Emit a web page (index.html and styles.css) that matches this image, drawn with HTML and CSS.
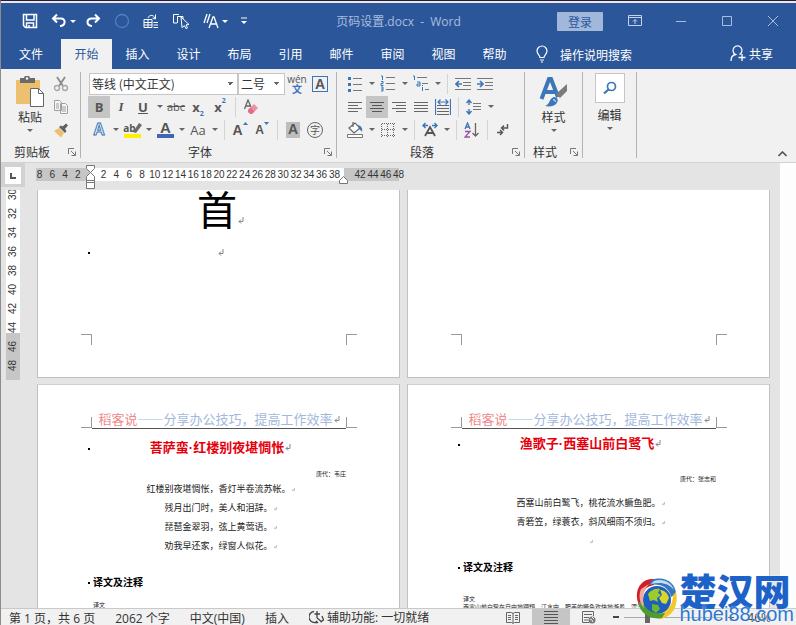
FILE: index.html
```html
<!DOCTYPE html>
<html lang="zh-CN">
<head>
  <meta charset="UTF-8">
  <meta name="viewport" content="width=device-width, initial-scale=1.0">
  <title>页码设置.docx - Word</title>
  <link rel="stylesheet" href="styles.css">
</head>
<body>

<svg class="defs" aria-hidden="true">
  <symbol id="mark" viewBox="0 0 6 8">
    <path d="M5 0v4.500H1M3 2.500l-2 2 2 2" fill="none" stroke="currentColor" stroke-width="1"/>
  </symbol>
  <symbol id="launcher" viewBox="0 0 8 8">
    <path d="M.5 6V.5H6M3 3l4 4M7.500 3.500v4h-4" fill="none" stroke="#777"/>
  </symbol>
</svg>

<div class="window">
  <header class="titlebar">
    <div class="quick">
      <button class="qbtn" aria-label="保存"><svg width="16" height="16" viewBox="0 0 16 16"><path d="M1.500 1.500h13v13h-11l-2-2zM4.500 1.500v5.500h7.500V1.500M4.500 14v-4h7v4M7 12v2" fill="none" stroke="#fff" stroke-width="1.500"/></svg></button>
      <button class="qbtn" aria-label="撤消"><svg width="16" height="16" viewBox="0 0 16 16"><path d="M2 5.500h8c5 0 5 7-1 7.500M6 1.500l-4 4 4 4" fill="none" stroke="#fff" stroke-width="2"/></svg><i class="caret"></i></button>
      <button class="qbtn" aria-label="恢复"><svg width="16" height="16" viewBox="0 0 16 16"><path d="M14 5.500H7c-6 0-6 7 0 7.500M10 1.500l4 4-4 4" fill="none" stroke="#fff" stroke-width="2"/></svg></button>
      <button class="qbtn" aria-label="状态"><svg width="16" height="16" viewBox="0 0 16 16"><circle cx="8" cy="8" r="6.500" fill="none" stroke="#4f7fc4" stroke-width="1.300"/></svg></button>
      <button class="qbtn" aria-label="表格"><svg width="16" height="16" viewBox="0 0 16 16"><path d="M1 6.500h8v8H1zM1 9.500h8M1 12h8M5 7v8M10.500 9.500H15M10.500 12H15M10.500 14.500H15M5 5c1-3 5-4 7 0M12.500 1.500V6l-3-1" fill="none" stroke="#fff"/></svg></button>
      <button class="qbtn" aria-label="选择"><svg width="18" height="16" viewBox="0 0 18 16"><path d="M7 1.500H1.500V10H5M5.500 10V3.500h5.500V6" fill="none" stroke="#fff"/><path d="M9 4l8 7.500-3 .4 1.500 3-1.500.8-1.500-3-2.500 1.800z" fill="#2b579a" stroke="#fff"/></svg></button>
      <button class="qbtn" aria-label="样式"><svg width="16" height="16" viewBox="0 0 16 16"><path d="M1 10L4 1M4 10L7 1M6 15l4-11h1l4 11M8 11h6" fill="none" stroke="#fff" stroke-width="1.300"/></svg><i class="caret"></i></button>
      <button class="qbtn last" aria-label="自定义快速访问工具栏"><svg width="8" height="8" viewBox="0 0 8 8"><path d="M1 1h6" stroke="#fff"/><path d="M1 4h6L4 7z" fill="#fff"/></svg></button>
    </div>
    <h1 class="doc-name">页码设置.docx&nbsp; -&nbsp; Word</h1>
    <div class="controls">
      <button class="signin">登录</button>
      <button class="ctl" aria-label="功能区显示选项"><svg width="14" height="12" viewBox="0 0 14 12"><path d="M.5.500h13v10H.5zM.5 2.500h13M7 9V4.500M5 6.500l2-2 2 2" fill="none" stroke="#c5d3ea"/></svg></button>
      <button class="ctl" aria-label="最小化"><svg width="12" height="12" viewBox="0 0 12 12"><path d="M1 6.500h10" stroke="#a9bddd"/></svg></button>
      <button class="ctl" aria-label="最大化"><svg width="12" height="12" viewBox="0 0 12 12"><path d="M1.500 1.500h9v9h-9z" fill="none" stroke="#a9bddd"/></svg></button>
      <button class="ctl" aria-label="关闭"><svg width="12" height="12" viewBox="0 0 12 12"><path d="M1 1l10 10M11 1L1 11" stroke="#a9bddd"/></svg></button>
    </div>
  </header>

  <nav class="tabs">
    <button class="tab file">文件</button>
    <button class="tab active">开始</button>
    <button class="tab">插入</button>
    <button class="tab">设计</button>
    <button class="tab">布局</button>
    <button class="tab">引用</button>
    <button class="tab">邮件</button>
    <button class="tab">审阅</button>
    <button class="tab">视图</button>
    <button class="tab">帮助</button>
    <button class="tell"><svg width="12" height="18" viewBox="0 0 12 18"><path d="M4 12.500c0-2-3-3.500-3-6.500a5 5 0 0 1 10 0c0 3-3 4.500-3 6.500zM4 15h4M5 17h2" fill="none" stroke="#fff" stroke-width="1.200"/></svg>操作说明搜索</button>
    <button class="share"><svg width="16" height="18" viewBox="0 0 16 18"><path d="M1 17c0-4 2-6 4.500-6.500a4.500 4.500 0 1 1 4 0M12 10v7M8.500 13.500h7" fill="none" stroke="#fff" stroke-width="1.300"/></svg>共享</button>
  </nav>

  <section class="ribbon">
    <div class="group clipboard">
      <div class="group-body">
        <button class="big">
          <svg width="30" height="32" viewBox="0 0 30 32"><path d="M1 4h24v24H1z" fill="#edc06f"/><path d="M5 2h4c0-3 6-3 6 0h5v5H5z" fill="#6a6a6a"/><circle cx="12" cy="2.500" r="1.200" fill="#fff"/><path d="M15.500 12.500h8l5 5v13h-13z" fill="#fff" stroke="#666"/><path d="M23.500 12.500v5h5" fill="none" stroke="#666"/></svg>
          <span>粘贴</span><i class="caret"></i>
        </button>
        <div class="stack">
          <button class="btn" aria-label="剪切"><svg width="16" height="16" viewBox="0 0 16 16"><path d="M4 1l6 9M12 1L6 10" stroke="#8a8a8a" stroke-width="1.800"/><circle cx="4" cy="12" r="2.500" fill="none" stroke="#a9a9a9" stroke-width="1.400"/><circle cx="12" cy="12" r="2.500" fill="none" stroke="#a9a9a9" stroke-width="1.400"/></svg></button>
          <button class="btn" aria-label="复制"><svg width="16" height="16" viewBox="0 0 16 16"><path d="M1.500 1.500h5l2 2v8h-7zM7.500 4.500h5l2 2v8h-7z" fill="#f6f6f6" stroke="#a0a0a0"/><path d="M3 5h3M3 7h3M3 9h3M9 8h4M9 10h4M9 12h4" stroke="#a0a0a0"/></svg></button>
          <button class="btn" aria-label="格式刷"><svg width="16" height="16" viewBox="0 0 16 16"><path d="M1 9l5-3 5 5-3 4.500z" fill="#edc06f"/><path d="M6 5l6 6 1.500-2-1.500-2 3-3.500L13 1.500 9.500 4.500 8 3.500z" fill="#606060"/></svg></button>
        </div>
      </div>
      <div class="group-name"><span>剪贴板</span><button class="launch" aria-label="剪贴板选项"><svg width="8" height="8"><use href="#launcher"/></svg></button></div>
    </div>

    <div class="group font">
      <div class="group-body rows">
        <div class="row">
          <select class="combo face" aria-label="字体"><option>等线 (中文正文)</option></select>
          <select class="combo size" aria-label="字号"><option>二号</option></select>
          <button class="btn wen" aria-label="拼音指南"><span>wén</span><b>文</b></button>
          <button class="btn" aria-label="字符边框"><span class="boxed">A</span></button>
        </div>
        <div class="row">
          <button class="btn on bold">B</button>
          <button class="btn italic">I</button>
          <button class="btn under">U</button><i class="caret"></i>
          <button class="btn strike">abc</button>
          <button class="btn script">x<sub>2</sub></button>
          <button class="btn script">x<sup>2</sup></button>
          <i class="sep"></i>
          <button class="btn" aria-label="清除格式"><svg width="16" height="16" viewBox="0 0 16 16"><path d="M1.500 10L5 1l3 7M3 7h4" fill="none" stroke="#666" stroke-width="1.300"/><path d="M5 11l6-6 4 4-6 6H7.500L5 13z" fill="#ee8fa2"/><path d="M5 11l2.500-2.500 4 4L9 15H7.500L5 13z" fill="#e26f86"/></svg></button>
        </div>
        <div class="row">
          <button class="btn effect">A</button><i class="caret"></i>
          <button class="btn hilite" aria-label="突出显示">ab<svg width="9" height="10" viewBox="0 0 9 10"><path d="M0 9l6-9 3 2-6 8z" fill="#6a6a6a"/></svg></button><i class="caret"></i>
          <button class="btn color">A</button><i class="caret"></i>
          <button class="btn case">Aa</button><i class="caret"></i>
          <i class="sep"></i>
          <button class="btn grow" aria-label="增大字号">A<svg width="5" height="3" viewBox="0 0 5 3"><path d="M0 3h5L2.500 0z" fill="#3b76b8"/></svg></button>
          <button class="btn shrink" aria-label="减小字号">A<svg width="5" height="3" viewBox="0 0 5 3"><path d="M0 0h5L2.500 3z" fill="#3b76b8"/></svg></button>
          <i class="sep"></i>
          <button class="btn" aria-label="字符底纹"><span class="shaded">A</span></button>
          <button class="btn" aria-label="带圈字符"><span class="ring">字</span></button>
        </div>
      </div>
      <div class="group-name"><span>字体</span><button class="launch" aria-label="字体选项"><svg width="8" height="8"><use href="#launcher"/></svg></button></div>
    </div>

    <div class="group para">
      <div class="group-body rows">
        <div class="row">
          <button class="btn" aria-label="项目符号"><svg width="16" height="16" viewBox="0 0 16 16"><path d="M1 1h3v3H1zM1 7h3v3H1zM1 13h3v3H1z" fill="#3b76b8"/><path d="M6 2.500h9M6 8.500h9M6 14.500h9" stroke="#777"/></svg></button><i class="caret"></i>
          <button class="btn" aria-label="编号"><svg width="16" height="17" viewBox="0 0 16 17"><path d="M1 1h1.500v4M1 6.500h2v2H1v2h2.500M1 12h2v4H1M1 14h2" fill="none" stroke="#3b76b8"/><path d="M6 2.500h9M6 8.500h9M6 14.500h9" stroke="#777"/></svg></button><i class="caret"></i>
          <button class="btn" aria-label="多级列表"><svg width="18" height="17" viewBox="0 0 18 17"><path d="M1 1h1.500v4M5 7h3v4H5V9h3M10.500 12v4M10.500 10v1" fill="none" stroke="#3b76b8"/><path d="M5 2.500h10M10 8.500h6M13 14.500h4" stroke="#777"/></svg></button><i class="caret"></i>
          <i class="sep"></i>
          <button class="btn" aria-label="减少缩进"><svg width="16" height="14" viewBox="0 0 16 14"><path d="M0 1.500h16M8 5.500h8M8 8.500h8M0 12.500h16" stroke="#777"/><path d="M1 7h6M4 4L1 7l3 3" fill="none" stroke="#3b76b8" stroke-width="1.700"/></svg></button>
          <button class="btn" aria-label="增加缩进"><svg width="16" height="14" viewBox="0 0 16 14"><path d="M0 1.500h16M8 5.500h8M8 8.500h8M0 12.500h16" stroke="#777"/><path d="M0 7h6M3 4l3 3-3 3" fill="none" stroke="#3b76b8" stroke-width="1.700"/></svg></button>
        </div>
        <div class="row">
          <button class="btn" aria-label="左对齐"><svg width="14" height="12" viewBox="0 0 14 12"><path d="M0 1.500h14M0 4.500h10M0 7.500h14M0 10.500h10" stroke="#666"/></svg></button>
          <button class="btn on" aria-label="居中"><svg width="14" height="12" viewBox="0 0 14 12"><path d="M0 1.500h14M2 4.500h10M0 7.500h14M2 10.500h10" stroke="#555"/></svg></button>
          <button class="btn" aria-label="右对齐"><svg width="14" height="12" viewBox="0 0 14 12"><path d="M0 1.500h14M4 4.500h10M0 7.500h14M4 10.500h10" stroke="#666"/></svg></button>
          <button class="btn" aria-label="两端对齐"><svg width="14" height="12" viewBox="0 0 14 12"><path d="M0 1.500h14M0 4.500h14M0 7.500h14M0 10.500h14" stroke="#666"/></svg></button>
          <button class="btn" aria-label="分散对齐"><svg width="16" height="16" viewBox="0 0 16 16"><path d="M2 6.500h12M2 9.500h12M2 12.500h12M2 15.500h12" stroke="#666"/><path d="M.5 0v16M15.500 0v16M3 3h10M5.500.5L3 3l2.500 2.500M10.500.5L13 3l-2.500 2.500" fill="none" stroke="#3b76b8" stroke-width="1.200"/></svg></button>
          <i class="sep"></i>
          <button class="btn" aria-label="行距"><svg width="16" height="16" viewBox="0 0 16 16"><path d="M7 4.500h8M7 7.500h8M7 10.500h8" stroke="#777"/><path d="M3 1v5M3 10v5M.5 4L3 1l2.500 3M.5 12L3 15l2.500-3" fill="none" stroke="#3b76b8" stroke-width="1.400"/></svg></button><i class="caret"></i>
        </div>
        <div class="row">
          <button class="btn" aria-label="底纹"><svg width="18" height="17" viewBox="0 0 18 17"><path d="M1.500 13.500h15v3h-15z" fill="#fff" stroke="#777"/><path d="M3 7l6-5 5 5-6 5zM7 1v5" fill="#fff" stroke="#666" stroke-width="1.200"/><path d="M12 4c3 1 5 3 4 7-1-2-2-2-3-3z" fill="#3b76b8"/></svg></button><i class="caret"></i>
          <button class="btn" aria-label="边框"><svg width="14" height="14" viewBox="0 0 14 14"><path d="M1 .5h13M1 6.500h13M.5 1v13M6.500 1v13M12.500 1v13M1 12.500h13" stroke="#666" stroke-dasharray="1 1"/></svg></button><i class="caret"></i>
          <i class="sep"></i>
          <button class="btn" aria-label="中文版式"><svg width="16" height="16" viewBox="0 0 16 16"><path d="M3 14L8 5l5 9M5 11h6" fill="none" stroke="#555" stroke-width="1.800"/><path d="M1 3.500h5M10 3.500h5M3.500 1L1 3.500 3.500 6M12.500 1L15 3.500 12.500 6" fill="none" stroke="#3b76b8" stroke-width="1.400"/></svg></button><i class="caret"></i>
          <i class="sep"></i>
          <button class="btn" aria-label="排序"><svg width="16" height="16" viewBox="0 0 16 16"><path d="M1 7l2.500-6L6 7M2 5h3" fill="none" stroke="#3b76b8" stroke-width="1.300"/><path d="M1 9.500h5l-5 5.500h5" fill="none" stroke="#9b4fa8" stroke-width="1.300"/><path d="M11.500 1v13M8.500 11l3 3 3-3" fill="none" stroke="#666" stroke-width="1.300"/></svg></button>
          <i class="sep"></i>
          <button class="btn" aria-label="显示编辑标记"><svg width="14" height="14" viewBox="0 0 14 14"><path d="M11.500 1v4H6M8 2.500L5.500 5 8 7.500M1 9.500h5M4 7l2.500 2.500L4 12" fill="none" stroke="#555" stroke-width="1.400"/></svg></button>
        </div>
      </div>
      <div class="group-name"><span>段落</span><button class="launch" aria-label="段落选项"><svg width="8" height="8"><use href="#launcher"/></svg></button></div>
    </div>

    <div class="group styles">
      <div class="group-body">
        <button class="big">
          <svg width="30" height="32" viewBox="0 0 30 32"><path d="M2.500 23L10 3h2l7 18M5.500 16h10" fill="none" stroke="#3b76b8" stroke-width="4"/><path d="M28 8v7l-7 7-4-4z" fill="#7b7b7b"/><path d="M6 30c5-1 4-8 9-9 4 0 5 4 2 7-2 2-6 3-11 2z" fill="#3b76b8"/><path d="M14 24c2-1 3 1 2 2" fill="none" stroke="#fff"/></svg>
          <span>样式</span><i class="caret"></i>
        </button>
      </div>
      <div class="group-name"><span>样式</span><button class="launch" aria-label="样式选项"><svg width="8" height="8"><use href="#launcher"/></svg></button></div>
    </div>

    <div class="group edit">
      <div class="group-body">
        <button class="big">
          <span class="find"><svg width="14" height="14" viewBox="0 0 14 14"><circle cx="8.500" cy="5.500" r="4" fill="none" stroke="#3b76b8" stroke-width="1.700"/><path d="M5.500 8.500L1 12.500" stroke="#3b76b8" stroke-width="2.200"/></svg></span>
          <span>编辑</span><i class="caret"></i>
        </button>
      </div>
    </div>
    <button class="collapse" aria-label="折叠功能区"><svg width="9" height="6" viewBox="0 0 9 6"><path d="M.5 5l4-4 4 4" fill="none" stroke="#555" stroke-width="1.600"/></svg></button>
  </section>

  <main class="workspace">
    <div class="corner"><span><svg width="6" height="6" viewBox="0 0 6 6"><path d="M1 0v5h5" fill="none" stroke="#555" stroke-width="2"/></svg></span></div>
    <div class="ruler-row">
      <div class="ruler">
        <span>8</span><span>6</span><span>4</span><span>2</span><span></span><span>2</span><span>4</span><span>6</span><span>8</span><span>10</span><span>12</span><span>14</span><span>16</span><span>18</span><span>20</span><span>22</span><span>24</span><span>26</span><span>28</span><span>30</span><span>32</span><span>34</span><span>36</span><span>38</span><span></span><span>42</span><span>44</span><span>46</span><span>48</span>
        <svg class="indent left" width="10" height="25" viewBox="0 0 10 25"><path d="M.5.500h8v3l-4 4-4-4zM.5 15.500v-4l4-4 4 4v4zM.5 15.500h8v2h-8zM.5 17.500h8v6h-8z" fill="#fff" stroke="#777"/></svg>
        <svg class="indent right" width="10" height="8" viewBox="0 0 10 8"><path d="M.5 7.500v-3l4-4 4 4v3z" fill="#fff" stroke="#777"/></svg>
      </div>
    </div>
    <div class="vruler">
      <span>30</span><span>32</span><span>34</span><span>36</span><span>38</span><span>40</span><span>42</span><span>44</span><span>46</span><span>48</span>
    </div>
    <div class="pages">
      <article class="page tail">
        <p class="huge">首<svg class="mark" width="6" height="8"><use href="#mark"/></svg></p>
        <p class="blank"><i class="dot"></i><svg class="mark" width="6" height="8"><use href="#mark"/></svg></p>
        <div class="crops bottom"><i></i><i></i></div>
      </article>
      <article class="page tail">
        <div class="crops bottom"><i></i><i></i></div>
      </article>

      <article class="page">
        <div class="page-head">
          <i class="crop"></i>
          <p><span class="brand">稻客说</span>——分享办公技巧，提高工作效率<svg class="mark" width="6" height="8"><use href="#mark"/></svg></p>
          <i class="crop"></i>
        </div>
        <div class="text first">
          <h2><i class="dot"></i>菩萨蛮<span class="mid">·</span>红楼别夜堪惆怅<svg class="mark" width="6" height="8"><use href="#mark"/></svg></h2>
          <p class="author">唐代：韦庄</p>
          <p class="verse">红楼别夜堪惆怅，香灯半卷流苏帐。<svg class="mark" width="3" height="4"><use href="#mark"/></svg></p>
          <p class="verse">残月出门时，美人和泪辞。<svg class="mark" width="3" height="4"><use href="#mark"/></svg></p>
          <p class="verse">琵琶金翠羽，弦上黄莺语。<svg class="mark" width="3" height="4"><use href="#mark"/></svg></p>
          <p class="verse">劝我早还家，绿窗人似花。<svg class="mark" width="3" height="4"><use href="#mark"/></svg></p>
          <h3><i class="dot"></i>译文及注释</h3>
          <p class="note">译文</p>
        </div>
      </article>
      <article class="page">
        <div class="page-head">
          <i class="crop"></i>
          <p><span class="brand">稻客说</span>——分享办公技巧，提高工作效率<svg class="mark" width="6" height="8"><use href="#mark"/></svg></p>
          <i class="crop"></i>
        </div>
        <div class="text second">
          <h2><i class="dot"></i>渔歌子<span class="mid">·</span>西塞山前白鹭飞<svg class="mark" width="6" height="8"><use href="#mark"/></svg></h2>
          <p class="author">唐代：张志和</p>
          <p class="verse">西塞山前白鹭飞，桃花流水鳜鱼肥。<svg class="mark" width="3" height="4"><use href="#mark"/></svg></p>
          <p class="verse">青箬笠，绿蓑衣，斜风细雨不须归。<svg class="mark" width="3" height="4"><use href="#mark"/></svg></p>
          <p class="verse"><svg class="mark" width="3" height="4"><use href="#mark"/></svg></p>
          <h3><i class="dot"></i>译文及注释</h3>
          <p class="note">译文</p>
          <p class="note">西塞山前白鹭在自由地翱翔，江水中，肥美的鳜鱼欢快地游着，漂浮在水</p>
        </div>
      </article>
    </div>
    <div class="scroll"></div>
  </main>

  <footer class="status">
    <span>第 1 页，共 6 页</span>
    <span>2062 个字</span>
    <span>中文(中国)</span>
    <span>插入</span>
    <span class="access"><svg width="16" height="14" viewBox="0 0 16 14"><path d="M5 1.500a5.500 5.500 0 0 0 1 11h2M8 1v7M5.500 4H11M8 8l5 4M13 6l1.500 4-3 2M9 13l-2-2" fill="none" stroke="#444" stroke-width="1.300"/></svg>辅助功能: 一切就绪</span>
    <div class="views">
      <button class="view" aria-label="阅读视图"><svg width="14" height="13" viewBox="0 0 14 13"><path d="M.5 1.500h5l1.500 1 1.500-1h5v10h-5L7 12.500l-1.500-1h-5zM7 2v10M2 4.500h3M2 6.500h3M2 8.500h3M9 4.500h3M9 6.500h3M9 8.500h3" fill="none" stroke="#666"/></svg></button>
      <button class="view on" aria-label="页面视图"><svg width="14" height="13" viewBox="0 0 14 13"><path d="M0 .5h14M0 3.500h14M0 6.500h14M0 9.500h14M0 12.500h14" stroke="#555"/></svg></button>
      <button class="view" aria-label="Web 版式视图"><svg width="14" height="13" viewBox="0 0 14 13"><path d="M7 11.500H.5V.5h11V5M2 3.500h8M2 6.500h5M2 9h4" fill="none" stroke="#666"/><circle cx="10" cy="9" r="3.500" fill="#777"/><path d="M8 8l2 1 1 2M10 6l2 2" stroke="#eee" fill="none"/></svg></button>
    </div>
    <div class="zoom">
      <button aria-label="缩小"><i class="minus"></i></button>
      <input type="range" min="0" max="100" value="22" aria-label="显示比例">
      <button aria-label="放大">+</button>
      <span>46%</span>
    </div>
  </footer>

  <div class="watermark">
    <svg width="44" height="44" viewBox="0 0 44 44">
      <circle cx="22" cy="23" r="14" fill="#1d5fc0"/>
      <path d="M13 17c3-4 7-6 12-5l-2 4 3 2-4 3 1 4-4-2-4 1z" fill="#9dcb2b"/>
      <path d="M25 13c4 0 8 3 9 8l-3 6-4-1-3-5 3-3z" fill="#d9d52c"/>
      <path d="M17 27l6 1 2 4-4 4-4-3z" fill="#6fb52b"/>
      <path d="M19 2C5 1-2 15 4 28l6 5C5 22 6 10 19 8z" fill="#d0202a"/>
      <path d="M17 3c12-5 24 3 24 14l-5 3C34 10 25 6 14 8z" fill="#3477bd"/>
      <path d="M19 4c9-3 17 1 20 9C33 6 26 5 16 7z" fill="#c5dcf2"/>
      <path d="M41 15c3 14-4 26-17 27l-4-4c11-1 18-9 18-20z" fill="#f3c62b"/>
      <path d="M3 26c3 11 12 17 24 15l3-5C18 38 10 33 7 24z" fill="#4f9d2f"/>
      <path d="M6 12C3 19 5 27 9 31 7 22 8 14 14 7z" fill="#f4a6a0"/>
    </svg>
    <div><b>楚汉网</b><span>hubei88.com</span></div>
  </div>
</div>

</body>
</html>
```

FILE: styles.css
```css
* {
  box-sizing: border-box;
  margin: 0;
  padding: 0;
}

body {
  font-family: "Noto Sans CJK SC", "Open Sans", sans-serif;
  font-size: 12px;
  color: #333;
}

button {
  font: inherit;
  color: inherit;
  background: none;
  border: none;
}

svg {
  flex: none;
}

.defs {
  position: absolute;
  width: 0;
  height: 0;
}

.window {
  position: relative;
  height: 100vh;
  display: flex;
  flex-direction: column;
  overflow: hidden;
  border-top: 1px solid #2d1a33;
  border-left: 1px solid #8c8c8c;
}

.caret {
  width: 11px;
  display: flex;
  justify-content: center;
}

.caret::before {
  content: "";
  border: 3px solid transparent;
  border-top-color: #666;
  border-bottom: none;
}

/* title bar */
.titlebar {
  height: 38px;
  flex: none;
  display: grid;
  grid-template-columns: 1fr auto 1fr;
  align-items: center;
  background: #2b579a;
  border-top: 2px solid #e8e8ee;
  color: #fff;
}

.quick {
  display: flex;
  align-items: center;
  gap: 13px;
  padding-left: 21px;
}

.qbtn {
  display: flex;
  align-items: center;
}

.qbtn .caret {
  margin-right: -6px;
}

.qbtn .caret::before {
  border-top-color: #fff;
}

.qbtn.last {
  margin-left: 3px;
}

.doc-name {
  font-family: "Open Sans", "Noto Sans CJK SC", sans-serif;
  font-size: 12px;
  font-weight: normal;
  color: #a9bddd;
}

.controls {
  display: flex;
  align-items: center;
  justify-content: flex-end;
}

.signin {
  width: 46px;
  height: 19px;
  margin-right: 9px;
  background: #a2b8db;
  color: #2b579a;
  line-height: 19px;
  border-radius: 1px;
}

.ctl {
  width: 46px;
  height: 20px;
  display: flex;
  align-items: center;
  justify-content: center;
}

/* tabs */
.tabs {
  height: 30px;
  flex: none;
  display: flex;
  background: #2b579a;
  color: #fff;
}

.tab {
  width: 51px;
  padding-bottom: 2px;
}

.tab.file {
  width: 60px;
}

.tab.active {
  background: #f1f1f1;
  color: #2b579a;
}

.tell, .share {
  display: flex;
  align-items: center;
  gap: 12px;
}

.tell {
  margin-left: 16px;
}

.share {
  gap: 3px;
  margin: 0 23px 0 auto;
  padding-bottom: 2px;
}

/* ribbon */
.ribbon {
  height: 94px;
  flex: none;
  display: flex;
  background: #f1f1f1;
  border-bottom: 1px solid #d2d2d2;
}

.group {
  display: flex;
  flex-direction: column;
  margin: 3px 0 4px;
  border-right: 1px solid #b4b4b4;
}

.clipboard { width: 80px; }
.font { width: 256px; }
.para { width: 188px; }
.styles { width: 58px; }
.edit { width: 54px; }

.group-body {
  flex: 1;
  display: flex;
}

.clipboard .group-body {
  padding-left: 10px;
  gap: 1px;
}

.styles .group-body, .edit .group-body {
  justify-content: center;
}

.rows {
  flex-direction: column;
  padding-left: 7px;
}

.row, .stack {
  display: flex;
}

.stack {
  flex-direction: column;
}

.row {
  height: 23px;
  align-items: center;
}

.btn {
  width: 22px;
  height: 22px;
  flex: none;
  display: flex;
  align-items: center;
  justify-content: center;
  color: #555;
}

.stack .btn {
  height: 23px;
}

.btn.on {
  background: #c5c5c5;
}

.sep {
  width: 1px;
  height: 20px;
  margin: 0 4px;
  background: #d4d4d4;
}

.big {
  width: 38px;
  display: flex;
  flex-direction: column;
  align-items: center;
  padding-top: 4px;
  line-height: 17px;
}

.big > .caret {
  padding-top: 4px;
}

.edit .big {
  padding-top: 1px;
}

.find {
  width: 30px;
  height: 30px;
  margin-bottom: 3px;
  display: flex;
  align-items: center;
  justify-content: center;
  background: #fff;
  border: 1px solid #c6c6c6;
}

.group-name {
  height: 12px;
  display: flex;
  align-items: center;
  line-height: 12px;
}

.group-name span {
  flex: 1;
  text-align: center;
}

.launch {
  width: 17px;
  height: 8px;
  display: flex;
  justify-content: center;
}

.combo {
  height: 22px;
  padding-left: 2px;
  appearance: none;
  font: inherit;
  color: #333;
  background-color: #fff;
  background-image: linear-gradient(to bottom left, #666 50%, transparent 50%), linear-gradient(to bottom right, #666 50%, transparent 50%);
  background-repeat: no-repeat;
  background-size: 3px 3px;
  background-position: right 7px center, right 4px center;
  border: 1px solid #c6c6c6;
}

.face {
  width: 149px;
  margin-left: 1px;
}

.size {
  width: 47px;
}

.wen {
  width: 24px;
  flex-direction: column;
  font-family: "Open Sans", "Noto Sans CJK SC", sans-serif;
  font-size: 10px;
  line-height: 10px;
}

.wen b {
  color: #3b76b8;
}

.boxed, .shaded {
  width: 16px;
  height: 16px;
  border: 1px solid #3b76b8;
  font: bold 14px/14px "Liberation Sans", sans-serif;
}

.shaded {
  width: 14px;
  border: none;
  background: #bdbdbd;
}

.ring {
  width: 16px;
  height: 16px;
  border: 1px solid #666;
  border-radius: 50%;
  font-size: 10px;
  line-height: 14px;
}

.bold, .under {
  font: bold 13px "Open Sans", sans-serif;
}

.under {
  text-decoration: underline;
}

.italic {
  font: italic bold 13px "Liberation Serif", serif;
}

.strike {
  font: 11px "Open Sans", sans-serif;
  text-decoration: line-through;
}

.script {
  font: bold 13px "Open Sans", sans-serif;
}

.script sub, .script sup {
  font-size: 7px;
  color: #3b76b8;
}

.script sub {
  align-self: flex-end;
}

.script sup {
  align-self: flex-start;
}

.effect {
  font: bold 16px "Liberation Sans", sans-serif;
  color: #fff;
  -webkit-text-stroke: 1px #3b76b8;
}

.hilite, .color {
  width: 17px;
  height: 17px;
  margin: 0 2px 0 3px;
}

.hilite {
  border-bottom: 4px solid #ffef00;
  font: bold 10px "Open Sans", sans-serif;
}

.hilite svg {
  margin-left: -3px;
}

.color {
  border-bottom: 4px solid #3f66b5;
  font: bold 15px "Liberation Sans", sans-serif;
}

.case {
  font-family: "Open Sans", sans-serif;
  font-size: 13px;
}

.grow, .shrink {
  font: bold 14px "Liberation Sans", sans-serif;
}

.shrink {
  font-size: 12px;
}

.grow svg, .shrink svg {
  align-self: flex-start;
  margin-top: 3px;
}

.collapse {
  align-self: flex-end;
  margin: 0 9px 5px auto;
  line-height: 0;
}

/* rulers and pages */
.workspace {
  flex: 1;
  min-height: 0;
  display: grid;
  grid-template-columns: 24px 1fr 16px;
  grid-template-rows: 27px 1fr;
  background: #e4e4e4;
}

.corner {
  height: 24px;
  padding: 4px;
  background: #d2d2d2;
}

.corner span {
  height: 17px;
  display: flex;
  align-items: center;
  justify-content: center;
  background: #fdfdfd;
}

.ruler-row, .pages {
  display: grid;
  grid-template-columns: 1fr 1fr;
  gap: 6px 7px;
  padding: 0 10px 0 12px;
}

.ruler {
  position: relative;
  height: 13px;
  margin: 5px -5px 0 -4px;
  display: flex;
  background: linear-gradient(to right, transparent 3px, #c6c6c6 3px, #c6c6c6 57px, #fff 57px, #fff calc(100% - 61px), #c6c6c6 calc(100% - 61px), #c6c6c6 calc(100% - 6px), transparent 0);
}

.ruler span {
  flex: 1 1 0;
  width: 0;
  display: flex;
  justify-content: center;
  font: 10px/13px "Liberation Sans", sans-serif;
}

.indent {
  position: absolute;
}

.indent.left {
  top: -3px;
  left: 53px;
}

.indent.right {
  top: 8px;
  right: 56px;
}

.vruler {
  width: 14px;
  height: 190px;
  margin-left: 5px;
  padding-bottom: 5px;
  overflow: hidden;
  display: flex;
  flex-direction: column;
  justify-content: flex-end;
  background: linear-gradient(#fff 143px, #c6c6c6 143px);
}

.vruler span {
  height: 19px;
  flex: none;
  writing-mode: vertical-rl;
  transform: rotate(180deg);
  text-align: center;
  font: 10px/14px "Liberation Sans", sans-serif;
}

.pages {
  grid-template-rows: 188px 1fr;
  overflow: hidden;
}

.page {
  min-width: 0;
  overflow: hidden;
  background: #fff;
  border: 1px solid #c0c0c0;
  border-top-color: #d0d0d0;
  color: #222;
}

.page:nth-child(n+3) {
  border-bottom: none;
}

.tail {
  display: flex;
  flex-direction: column;
  border-top: none;
}

.mark {
  color: #888;
  margin-left: 1px;
}

.dot {
  position: absolute;
  left: 50px;
  top: 50%;
  width: 2px;
  height: 2px;
  background: #000;
}

.huge, .blank, .text h2, .verse {
  padding-left: 4px;
  text-align: center;
}

.huge {
  height: 40px;
  font-size: 40px;
  line-height: 36px;
  color: #000;
}

.blank {
  position: relative;
  height: 44px;
  line-height: 44px;
}

.crops {
  display: flex;
  justify-content: space-between;
  margin: auto 42px 32px 43px;
}

.crops i {
  width: 11px;
  height: 11px;
  border: solid #999;
  border-width: 1px 1px 0 0;
}

.crops i:last-child {
  border-width: 1px 0 0 1px;
}

.page-head {
  display: flex;
  align-items: flex-end;
  margin: 24px 42px 0 43px;
}

.page-head p {
  flex: 1;
  min-width: 0;
  height: 20px;
  border-bottom: 1px solid #555;
  font-size: 13px;
  line-height: 20px;
  text-align: center;
  white-space: nowrap;
  color: #a3b8dc;
}

.page-head .brand {
  color: #f08a8a;
}

.crop {
  width: 11px;
  height: 11px;
  margin-bottom: 1px;
  border: solid #999;
  border-width: 0 1px 1px 0;
}

.crop:last-child {
  border-width: 0 0 1px 1px;
}

.text {
  position: relative;
}

.text h2, .text h3 {
  position: relative;
  font-weight: bold;
}

.text h2 {
  margin-top: 8px;
  font-size: 13px;
  line-height: 20px;
  color: #e6000c;
}

.mid {
  font-family: "Liberation Sans", sans-serif;
}

.author {
  margin: 11px 53px 0 0;
  font-size: 6px;
  line-height: 10px;
  text-align: right;
}

.verse {
  height: 19px;
  font-size: 9px;
  line-height: 19px;
}

.text h3 {
  margin: 17px 0 0 55px;
  font-size: 10px;
  line-height: 20px;
  color: #000;
}

.text h3 .dot {
  left: -5px;
}

.note {
  height: 8px;
  margin: 9px 53px 0 55px;
  font-size: 6px;
  line-height: 8px;
  white-space: nowrap;
}

.second h2 {
  margin-top: 4px;
}

.second .author {
  margin: 20px 53px 9px 0;
}

.second h3 {
  margin-top: 7px;
}

.second .note {
  margin-top: 18px;
}

.second .note + .note {
  margin-top: 0;
}

.scroll {
  grid-column: 3;
  grid-row: 1 / 3;
  background: #fdfdfd;
}

/* status bar */
.status {
  height: 17px;
  flex: none;
  display: flex;
  gap: 20px;
  padding-left: 8px;
  background: #f1f1f1;
  border-top: 1px solid #c9c9c9;
  font-family: "Open Sans", "Noto Sans CJK SC", sans-serif;
  line-height: 19px;
  white-space: nowrap;
}

.access {
  display: flex;
  align-items: center;
  gap: 2px;
}

.views {
  display: flex;
  margin-left: auto;
}

.view {
  width: 38px;
  display: flex;
  align-items: center;
  justify-content: center;
}

.view.on {
  background: #c5c5c5;
}

.zoom {
  display: flex;
  align-items: center;
  gap: 5px;
  margin: 0 25px 0 -15px;
}

.minus {
  display: block;
  width: 6px;
  height: 2px;
  background: #444;
}

.zoom input {
  width: 98px;
  height: 12px;
  appearance: none;
  background: linear-gradient(#aaa, #aaa) no-repeat center / 100% 1px;
}

.zoom input::-webkit-slider-thumb {
  appearance: none;
  width: 5px;
  height: 11px;
  background: #666;
}

.zoom span {
  margin-left: 8px;
}

/* site mark over the lower right corner */
.watermark {
  position: absolute;
  right: 2px;
  bottom: 2px;
  display: flex;
  align-items: center;
  color: #1c62c8;
  pointer-events: none;
}

.watermark b, .watermark span {
  display: block;
  text-shadow: 0 0 2px #fff;
}

.watermark b {
  font-size: 37px;
  line-height: 30px;
  font-weight: 900;
}

.watermark span {
  font: 20px/18px "Liberation Sans", sans-serif;
  color: #2f78d0;
}
```
